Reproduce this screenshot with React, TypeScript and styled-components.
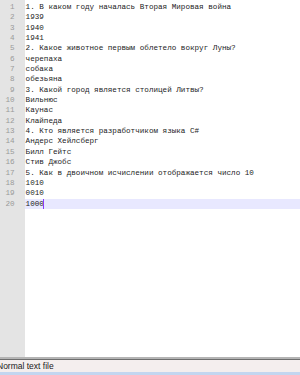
import React from 'react';
import { styled, createGlobalStyle } from 'styled-components';

const lines = [
  '1. В каком году началась Вторая Мировая война',
  '1939',
  '1940',
  '1941',
  '2. Какое животное первым облетело вокруг Луны?',
  'черепаха',
  'собака',
  'обезьяна',
  '3. Какой город является столицей Литвы?',
  'Вильнюс',
  'Каунас',
  'Клайпеда',
  '4. Кто является разработчиком языка C#',
  'Андерс Хейлсберг',
  'Билл Гейтс',
  'Стив Джобс',
  '5. Как в двоичном исчислении отображается число 10',
  '1010',
  '0010',
  '1000'
];

const currentLine = lines.length - 1;

const App = () => {
  return (
    <>
      <GlobalStyle />
      <S.Window>
        <S.Editor>
          <S.Gutter>
            {lines.map((_, i) => (
              <S.LineNumber key={i}>{i + 1}</S.LineNumber>
            ))}
          </S.Gutter>
          <S.Content>
            {lines.map((text, i) => (
              <S.Line key={i} $active={i === currentLine}>
                {text}
                {i === currentLine && <S.Caret />}
              </S.Line>
            ))}
          </S.Content>
        </S.Editor>
        <S.StatusBar>
          <S.StatusText>Normal text file</S.StatusText>
        </S.StatusBar>
      </S.Window>
    </>
  );
};

export default App;

const GlobalStyle = createGlobalStyle`
  html, body {
    margin: 0;
    padding: 0;
    background: #ffffff;
    overflow: hidden;
  }
`;

const S = {
  Window: styled.div`
    display: flex;
    flex-direction: column;
    width: 300px;
    height: 375px;
    overflow: hidden;
  `,
  Editor: styled.div`
    flex: 1;
    display: grid;
    grid-template-columns: 25px 1fr;
    background: #ffffff;
    border-bottom: 2px solid #b4b4b4;
  `,
  Gutter: styled.div`
    background: #e4e4e4;
    padding-top: 1.8px;
  `,
  LineNumber: styled.div`
    width: 14.5px;
    text-align: right;
    height: 10.37px;
    line-height: 10.37px;

    color: #9a9a9a;
    font-family: 'Liberation Mono', monospace;
    font-size: 7.6px;
  `,
  Content: styled.div`
    padding-top: 1.8px;
  `,
  Line: styled.div<{ $active: boolean }>`
    display: flex;
    align-items: center;
    height: 10.37px;
    padding-left: 0.6px;
    white-space: pre;
    background: ${(p) => (p.$active ? '#e8e8ff' : 'transparent')};

    color: #1c1c1c;
    font-family: 'Liberation Mono', monospace;
    font-size: 7.62px;
    line-height: 10.37px;
  `,
  Caret: styled.span`
    display: inline-block;
    width: 1px;
    height: 10px;
    margin-left: -0.5px;
    background: #8a3cff;
  `,
  StatusBar: styled.div`
    display: flex;
    align-items: center;
    height: 12px;
    background: #f4eeee;
    border-top: 1px solid #6e6e6e;
    border-bottom: 3px solid #c3d6f0;
  `,
  StatusText: styled.span`
    margin-left: -3px;
    color: #1a1a1a;
    font-family: 'Liberation Sans', Arial, sans-serif;
    font-size: 8.5px;
    white-space: nowrap;
  `
};
